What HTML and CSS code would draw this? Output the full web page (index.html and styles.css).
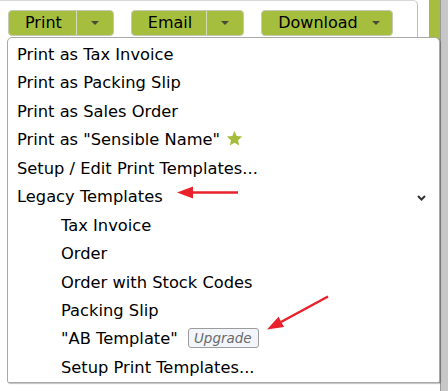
FILE: index.html
```html
<!DOCTYPE html>
<html>
<head>
<meta charset="utf-8">
<link rel="stylesheet" href="styles.css">
</head>
<body>
<div class="page">
  <div class="main">
    <div class="panel">
      <div class="toolbar">
        <div class="btn">
          <span class="btn-label">Print</span>
          <span class="btn-caret"><span class="tri"></span></span>
        </div>
        <div class="btn">
          <span class="btn-label">Email</span>
          <span class="btn-caret"><span class="tri"></span></span>
        </div>
        <div class="btn btn-single">
          <span class="btn-label">Download</span>
          <span class="tri"></span>
        </div>
      </div>
    </div>
    <div class="menu">
      <div class="item">Print as Tax Invoice</div>
      <div class="item">Print as Packing Slip</div>
      <div class="item">Print as Sales Order</div>
      <div class="item">Print as "Sensible Name" <svg class="star" width="17" height="17" viewBox="0 0 24 24"><path d="M12 1.5l3.1 7.1 7.7.7-5.8 5.1 1.7 7.6L12 18l-6.7 4 1.7-7.6L1.2 9.3l7.7-.7z" fill="#a4bd3b"/></svg></div>
      <div class="item">Setup / Edit Print Templates...</div>
      <div class="item item-group"><span>Legacy Templates</span><svg class="chev" width="9" height="6" viewBox="0 0 9 6"><path d="M1 1L4.5 4.5L8 1" fill="none" stroke="#333" stroke-width="2"/></svg></div>
      <div class="item sub">Tax Invoice</div>
      <div class="item sub">Order</div>
      <div class="item sub">Order with Stock Codes</div>
      <div class="item sub">Packing Slip</div>
      <div class="item sub">"AB Template" <span class="badge">Upgrade</span></div>
      <div class="item sub">Setup Print Templates...</div>
    </div>
    <svg class="annot" width="448" height="391" viewBox="0 0 448 391">
      <line x1="191" y1="192.5" x2="238" y2="192.5" stroke="#e8212b" stroke-width="2.5"/>
      <polygon points="177,192.5 193,186.5 193,198.5" fill="#e8212b"/>
      <line x1="328" y1="296.5" x2="281" y2="322" stroke="#e8212b" stroke-width="2.5"/>
      <polygon points="267,329.5 284,327 278.5,316.8" fill="#e8212b"/>
    </svg>
  </div>
  <div class="rail-green"></div>
  <div class="rail-grey"></div>
</div>
</body>
</html>
```
FILE: styles.css
```css
* { box-sizing: border-box; }
html, body { margin: 0; padding: 0; background: #fff; }
body {
  font-family: "DejaVu Sans", Verdana, sans-serif;
  font-size: 16px;
  color: #000;
  width: 448px;
  height: 391px;
  overflow: hidden;
}
.page { display: flex; height: 391px; }
.main { width: 429px; position: relative; }
.panel {
  width: 418px;
  height: 40px;
  border-right: 1px solid #bdbdbd;
  border-top: 1px solid #d8d8d8;
  border-top-right-radius: 5px;
}
.toolbar {
  display: flex;
  gap: 17px;
  padding: 9px 0 0 8px;
}
.btn {
  display: flex;
  align-items: center;
  height: 26px;
  background: #a5be3d;
  border: 1px solid #c5c9b5;
  border-radius: 4px;
}
.btn-label {
  padding: 0 14px 0 16px;
  line-height: 24px;
}
.btn-caret {
  width: 37px;
  height: 24px;
  border-left: 1px solid #d4dbb6;
  display: flex;
  align-items: center;
  justify-content: center;
}
.tri {
  width: 0;
  height: 0;
  border-left: 4px solid transparent;
  border-right: 4px solid transparent;
  border-top: 4px solid #4a4a3a;
}
.btn-single { padding-right: 12px; }
.btn-single .btn-label { padding-right: 14px; }
.menu {
  position: absolute;
  left: 7px;
  top: 37px;
  width: 433px;
  background: #fff;
  border: 1px solid #a9a9a9;
  border-radius: 5px 5px 2px 2px;
  box-shadow: 1px 1px 1px rgba(0,0,0,0.25);
  padding-top: 3px;
  z-index: 2;
  font-size: 16.3px;
}
.item {
  line-height: 28.43px;
  padding-left: 9px;
  white-space: nowrap;
}
.item.sub { padding-left: 53px; }
.item-group {
  display: flex;
  justify-content: space-between;
  align-items: center;
  padding-right: 13px;
}
.chev { margin-top: 2px; }
.star { vertical-align: -2px; margin-left: 1px; }
.badge {
  display: inline-block;
  font-size: 13.5px;
  font-style: italic;
  color: #6a6a6a;
  background: #f2f6fb;
  border: 1px solid #9c9c9c;
  border-radius: 3px;
  line-height: 18px;
  padding: 0 6px 0 5px;
  margin-left: 5px;
  vertical-align: 1px;
}
.annot {
  position: absolute;
  left: 0;
  top: 0;
  z-index: 3;
  pointer-events: none;
}
.rail-green { width: 11px; height: 383px; background: #a5be3d; }
.rail-grey { flex: 1; background: #c7c7c7; border-left: 1px solid #9a9a9a; }
```
